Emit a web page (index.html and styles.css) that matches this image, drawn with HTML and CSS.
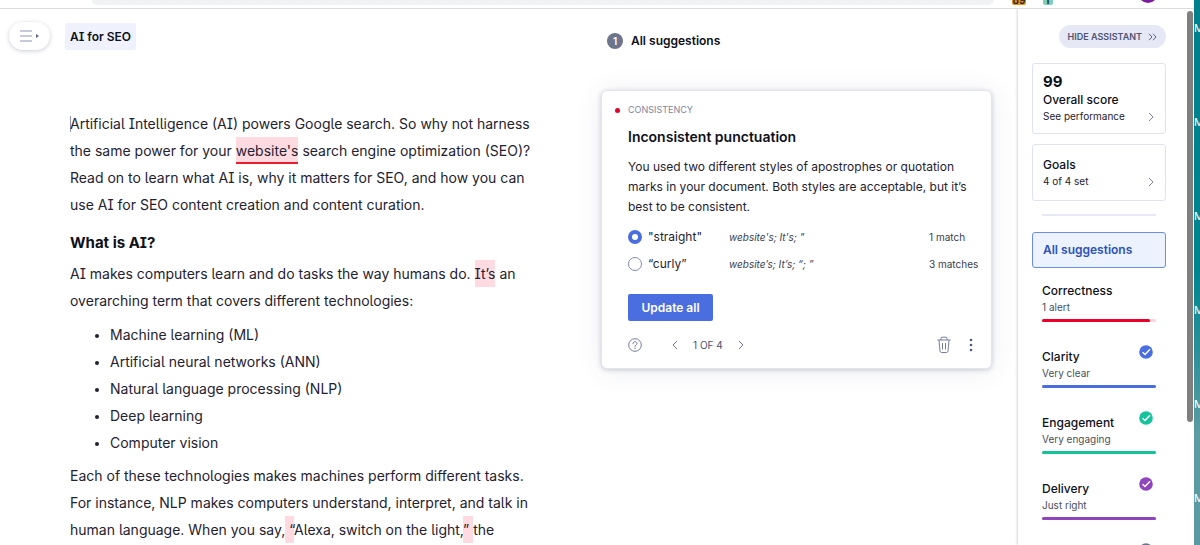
FILE: index.html
```
<!DOCTYPE html>
<html lang="en">
    <head>
        <meta charset="utf-8">
        <title>AI for SEO</title>
        <link rel="stylesheet" href="styles.css">
    </head>
    <body>
        <div class="browser">
            <div class="toolbar">
                <div class="omnibox"></div>
                <div class="extensions">
                    <span class="ext orange">89</span>
                    <span class="ext mint">T</span>
                    <span class="avatar"></span>
                </div>
            </div>
            <div class="page">
                <main class="editor">
                    <header class="editor-head">
                        <button class="menu" aria-label="Open menu">
                            <svg width="22" height="14" viewBox="0 0 22 14">
                                <path d="M1 2h12M1 7h12M1 12h12" stroke="#8d95b5" stroke-width="1"/>
                                <path d="M17 5l3 2-3 2z" fill="#5a6488"/>
                            </svg>
                        </button>
                        <h1 class="doc-title">AI for SEO</h1>
                    </header>
                    <article class="doc">
                        <p><span class="caret"></span>Artificial Intelligence (AI) powers Google search. So why not harness the same power for your <mark class="active">website's</mark> search engine optimization (SEO)? Read on to learn what AI is, why it matters for SEO, and how you can use AI for SEO content creation and content curation.</p>
                        <h2>What is AI?</h2>
                        <p>AI makes computers learn and do tasks the way humans do. <mark>It’s</mark> an overarching term that covers different technologies:</p>
                        <ul>
                            <li>Machine learning (ML)</li>
                            <li>Artificial neural networks (ANN)</li>
                            <li>Natural language processing (NLP)</li>
                            <li>Deep learning</li>
                            <li>Computer vision</li>
                        </ul>
                        <p>Each of these technologies makes machines perform different tasks. For instance, NLP makes computers understand, interpret, and talk in human language. When you say,<mark> “</mark>Alexa, switch on the light,<mark>” </mark>the</p>
                    </article>
                </main>

                <section class="suggestions">
                    <header class="suggestions-head">
                        <span class="count">1</span>
                        <h2>All suggestions</h2>
                    </header>
                    <form class="card">
                        <div class="category">Consistency</div>
                        <h3>Inconsistent punctuation</h3>
                        <p>You used two different styles of apostrophes or quotation marks in your document. Both styles are acceptable, but it’s best to be consistent.</p>
                        <div class="option">
                            <input type="radio" name="quotes" id="straight" checked>
                            <label for="straight">"straight"</label>
                            <em>website's; It's; "</em>
                            <span class="matches">1 match</span>
                        </div>
                        <div class="option">
                            <input type="radio" name="quotes" id="curly">
                            <label for="curly">“curly”</label>
                            <em>website’s; It’s; “; ”</em>
                            <span class="matches">3 matches</span>
                        </div>
                        <button type="button" class="update">Update all</button>
                        <footer class="card-foot">
                            <button type="button" class="icon" aria-label="Help">
                                <svg width="14" height="14" viewBox="0 0 14 14" fill="none" stroke="#747d9f">
                                    <circle cx="7" cy="7" r="6.3"/>
                                    <path d="M5 5.6C5 4.3 5.9 3.6 7 3.6s2 .7 2 1.8c0 1.4-2 1.6-2 3" stroke-linecap="round"/>
                                    <circle cx="7" cy="10.3" r=".7" fill="#747d9f" stroke="none"/>
                                </svg>
                            </button>
                            <div class="pager">
                                <button type="button" class="icon" aria-label="Previous">
                                    <svg width="8" height="10" viewBox="0 0 8 10" fill="none" stroke="#6d7699"><path d="M6 1L2 5l4 4"/></svg>
                                </button>
                                <span>1 OF 4</span>
                                <button type="button" class="icon" aria-label="Next">
                                    <svg width="8" height="10" viewBox="0 0 8 10" fill="none" stroke="#6d7699"><path d="M2 1l4 4-4 4"/></svg>
                                </button>
                            </div>
                            <button type="button" class="icon" aria-label="Dismiss">
                                <svg width="14" height="18" viewBox="0 0 14 18" fill="none" stroke="#747d9f">
                                    <path d="M.5 4h13M4 4V2.2Q4 1.2 5 1.2h4q1 0 1 1V4M2 4l1 11q.2 1.5 1.6 1.5h4.8q1.4 0 1.6-1.5L12 4M5.5 7v6.5M8.5 7v6.5"/>
                                </svg>
                            </button>
                            <button type="button" class="icon" aria-label="More">
                                <svg width="4" height="14" viewBox="0 0 4 14" fill="#4f587d">
                                    <circle cx="2" cy="2" r="1.3"/><circle cx="2" cy="7" r="1.3"/><circle cx="2" cy="12" r="1.3"/>
                                </svg>
                            </button>
                        </footer>
                    </form>
                </section>

                <aside class="assistant">
                    <button class="hide">HIDE ASSISTANT
                        <svg width="9" height="8" viewBox="0 0 9 8" fill="none" stroke="#5a6288"><path d="M1 .8L4 4 1 7.2M5 .8L8 4 5 7.2"/></svg>
                    </button>
                    <button class="box score">
                        <b>99</b>
                        <strong>Overall score</strong>
                        <span>See performance
                            <svg width="8" height="10" viewBox="0 0 8 10" fill="none" stroke="#7d86a8"><path d="M2 1l4 4-4 4"/></svg>
                        </span>
                    </button>
                    <button class="box goals">
                        <strong>Goals</strong>
                        <span>4 of 4 set
                            <svg width="8" height="10" viewBox="0 0 8 10" fill="none" stroke="#7d86a8"><path d="M2 1l4 4-4 4"/></svg>
                        </span>
                    </button>
                    <hr>
                    <button class="box all">All suggestions</button>
                    <ul class="metrics">
                        <li class="red">
                            <strong>Correctness</strong>
                            <span>1 alert</span>
                            <div class="bar"><i style="width: 95%"></i></div>
                        </li>
                        <li class="blue">
                            <svg class="check" width="14" height="14" viewBox="0 0 14 14"><circle cx="7" cy="7" r="6.8"/><path d="M3.6 7.2l2.4 2.3 5-5.3"/></svg>
                            <strong>Clarity</strong>
                            <span>Very clear</span>
                            <div class="bar"><i style="width: 100%"></i></div>
                        </li>
                        <li class="green">
                            <svg class="check" width="14" height="14" viewBox="0 0 14 14"><circle cx="7" cy="7" r="6.8"/><path d="M3.6 7.2l2.4 2.3 5-5.3"/></svg>
                            <strong>Engagement</strong>
                            <span>Very engaging</span>
                            <div class="bar"><i style="width: 100%"></i></div>
                        </li>
                        <li class="purple">
                            <svg class="check" width="14" height="14" viewBox="0 0 14 14"><circle cx="7" cy="7" r="6.8"/><path d="M3.6 7.2l2.4 2.3 5-5.3"/></svg>
                            <strong>Delivery</strong>
                            <span>Just right</span>
                            <div class="bar"><i style="width: 100%"></i></div>
                        </li>
                        <li class="slate">
                            <svg class="check" width="14" height="14" viewBox="0 0 14 14"><circle cx="7" cy="7" r="6.8"/><path d="M3.6 7.2l2.4 2.3 5-5.3"/></svg>
                        </li>
                    </ul>
                </aside>
                <div class="scroll"><div class="thumb"></div></div>
            </div>
        </div>
        <div class="desktop">
            <span>M</span><span>M</span><span>M</span><span>M</span><span>M</span><span>M</span>
        </div>
    </body>
</html>
```

FILE: styles.css
```
*{
    box-sizing: border-box;
}
body{
    margin: 0;
    height: 100vh;
    display: flex;
    overflow: hidden;
    font-family: Inter, "Liberation Sans", sans-serif;
    font-size: 12px;
    color: #1f2230;
    background: #fff;
}
h1, h2, h3, p, ul{
    margin: 0;
    padding: 0;
}
button{
    font: inherit;
    color: inherit;
    border: 0;
    padding: 0;
    background: none;
}
svg{
    display: block;
    flex: none;
}
.browser{
    flex: 1;
    min-width: 0;
    display: flex;
    flex-direction: column;
}

/* browser toolbar */
.toolbar{
    flex: none;
    height: 9px;
    display: flex;
    align-items: flex-start;
    padding-left: 92px;
    border-bottom: solid 1px #dcdcde;
}
.omnibox{
    flex: 1;
    height: 5px;
    border-radius: 0 0 8px 8px;
    background: #f1f2f4;
}
.extensions{
    width: 200px;
    height: 5px;
    display: flex;
    gap: 17px;
    padding-left: 18px;
}
.ext{
    height: 5px;
    width: 14px;
    overflow: hidden;
    border-radius: 0 0 2px 2px;
    font-size: 10px;
    line-height: 1px;
    font-weight: 600;
    text-align: center;
}
.orange{
    background: #f7900a;
}
.mint{
    width: 10px;
    background: #7ccfb8;
}
.avatar{
    width: 20px;
    height: 20px;
    margin: -17px 0 0 68px;
    border-radius: 50%;
    background: #7b1fa2;
}

/* document */
.page{
    flex: 1;
    min-height: 0;
    display: flex;
    overflow: hidden;
}
.editor{
    flex: 1;
    min-width: 0;
    font-feature-settings: "cv05", "cv08";
}
.editor-head{
    display: flex;
    align-items: center;
    gap: 15px;
    padding: 13px 0 0 9px;
}
.menu{
    width: 41px;
    height: 28px;
    display: flex;
    align-items: center;
    justify-content: center;
    border-radius: 14px;
    box-shadow: 0 1px 4px rgba(60, 65, 100, .25);
}
.doc-title{
    padding: 0 5px;
    border-radius: 2px;
    background: #eff2fd;
    font-size: 12px;
    line-height: 27px;
    font-weight: 600;
    color: #0e101a;
}
.doc{
    width: 541px;
    padding: 60px 0 0 70px;
    font-size: 14px;
    line-height: 27px;
}
.caret{
    display: inline-block;
    width: 1px;
    height: 16px;
    margin-right: -1px;
    vertical-align: -3px;
    background: #8b93c8;
}
.doc h2{
    margin: 11px 0 4px;
    font-size: 15px;
    line-height: 27px;
    font-weight: 700;
    color: #0e101a;
}
.doc ul{
    margin: 7px 0 6px;
    padding-left: 40px;
}
.doc li::marker{
    font-size: 12px;
}
mark{
    padding: 5px 0;
    color: inherit;
    background: #ffdbe1;
}
.active{
    border-bottom: solid 2px #ee1c2e;
    padding-bottom: 3px;
}

/* suggestion cards */
.suggestions{
    width: 391px;
    margin-right: 26px;
}
.suggestions-head{
    display: flex;
    align-items: center;
    gap: 8px;
    padding: 23px 0 0 6px;
}
.suggestions-head h2{
    font-size: 12px;
    line-height: 18px;
    font-weight: 600;
    color: #0e101a;
}
.count{
    width: 16px;
    height: 16px;
    border-radius: 50%;
    background: #6d758d;
    color: #fff;
    font-size: 10px;
    line-height: 16px;
    font-weight: 600;
    text-align: center;
}
.card{
    margin-top: 40px;
    padding: 12px 12px 14px 26px;
    border: solid 1px #e4e6ee;
    border-radius: 6px;
    background: #fff;
    box-shadow: 0 1px 4px rgba(40, 45, 80, .22), 0 2px 26px rgba(60, 70, 120, .1);
}
.category{
    display: flex;
    align-items: center;
    gap: 8px;
    margin-left: -13px;
    font-size: 9px;
    line-height: 14px;
    text-transform: uppercase;
    color: #7e869f;
}
.category::before{
    content: "";
    width: 5px;
    height: 5px;
    border-radius: 50%;
    background: #eb0029;
}
.card h3{
    margin: 10px 0;
    font-size: 14px;
    line-height: 20px;
    font-weight: 600;
    color: #0e101a;
}
.card p{
    margin-bottom: 6px;
    font-size: 12px;
    line-height: 20px;
}
.option{
    display: grid;
    grid-template-columns: 20px 81px 1fr 50px;
    align-items: center;
    height: 27px;
    font-size: 12px;
}
.option input{
    appearance: none;
    width: 14px;
    height: 14px;
    margin: 0;
    border: solid 1px #7f89b5;
    border-radius: 50%;
}
.option input:checked{
    border: solid 4px #4a6ee0;
}
.option em, .matches{
    font-size: 10px;
    color: #3a3e4c;
}
.matches{
    white-space: nowrap;
}
.update{
    display: block;
    width: 85px;
    height: 27px;
    margin-top: 17px;
    border-radius: 2px;
    background: #4a6ee0;
    color: #fff;
    font-size: 12px;
    font-weight: 600;
}
.card-foot{
    display: flex;
    align-items: center;
    gap: 18px;
    height: 18px;
    margin-top: 15px;
    padding-right: 6px;
}
.pager{
    flex: 1;
    display: flex;
    align-items: center;
    gap: 14px;
    margin-left: 11px;
    font-size: 10px;
    color: #4a516d;
}

/* assistant panel */
.assistant{
    width: 168px;
    display: flex;
    flex-direction: column;
    flex: none;
    padding: 16px 20px 0 14px;
    box-shadow: 0 0 3px rgba(0, 0, 0, .3);
    clip-path: inset(0 0 0 -4px);
}
.hide{
    align-self: flex-end;
    display: flex;
    align-items: center;
    gap: 6px;
    flex: none;
    height: 23px;
    padding: 0 9px;
    border-radius: 12px;
    background: #e7e8f5;
    font-size: 9px;
    font-weight: 600;
    white-space: nowrap;
    color: #4d5475;
}
.box{
    flex: none;
    display: flex;
    flex-direction: column;
    padding: 0 10px;
    border: solid 1px #dfe2f1;
    border-radius: 3px;
    text-align: left;
    line-height: 17px;
}
.box span{
    display: flex;
    align-items: center;
    justify-content: space-between;
    font-size: 10px;
}
.box strong, .metrics strong{
    font-size: 12px;
    font-weight: 500;
    color: #0e101a;
}
.score{
    margin: 15px 0 10px;
    padding: 9px 10px 8px;
}
.score b{
    font-size: 15px;
    line-height: 18px;
    font-weight: 700;
    color: #0e101a;
}
.goals{
    padding: 11px 10px 10px;
}
.assistant hr{
    width: calc(100% - 20px);
    height: 2px;
    flex: none;
    margin: 13px 10px 16px;
    border: 0;
    background: #e7e8f5;
}
.all{
    border-color: #6c8df0;
    background: #ecf3ff;
    font-size: 12px;
    font-weight: 600;
    line-height: 34px;
    color: #2c50bd;
}
.metrics{
    padding: 14px 10px 0;
    list-style: none;
}
.metrics li{
    position: relative;
    height: 66px;
    line-height: 17px;
}
.metrics strong, .metrics span{
    display: block;
}
.metrics span{
    font-size: 10px;
    color: #4a4e5c;
}
.bar{
    height: 3px;
    margin-top: 3px;
    border-radius: 2px;
    background: #ffd3dc;
}
.bar i{
    display: block;
    height: 3px;
    border-radius: 2px;
    background: currentColor;
}
.check{
    position: absolute;
    top: -3px;
    right: 3px;
    fill: currentColor;
}
.check path{
    fill: none;
    stroke: #fff;
    stroke-width: 1.5;
}
.red{
    color: #eb0029;
}
.blue{
    color: #4a6ee0;
}
.green{
    color: #15c39a;
}
.purple{
    color: #8f45bd;
}
.slate{
    color: #6d758d;
}
.scroll{
    flex: none;
    width: 8px;
    padding: 2px 1px 0;
}
.thumb{
    width: 6px;
    height: 77%;
    border-radius: 3px;
    background: #7f7f7f;
}

/* desktop behind the window */
.desktop{
    flex: none;
    width: 6px;
    padding-top: 20px;
    overflow: hidden;
    background: linear-gradient(#007f8c, #008590 50%, #5e9ca3 80%, #5a9aa2);
    color: #fff;
    font-size: 11px;
    line-height: 16px;
}
.desktop span{
    display: block;
    height: 94px;
}
```
